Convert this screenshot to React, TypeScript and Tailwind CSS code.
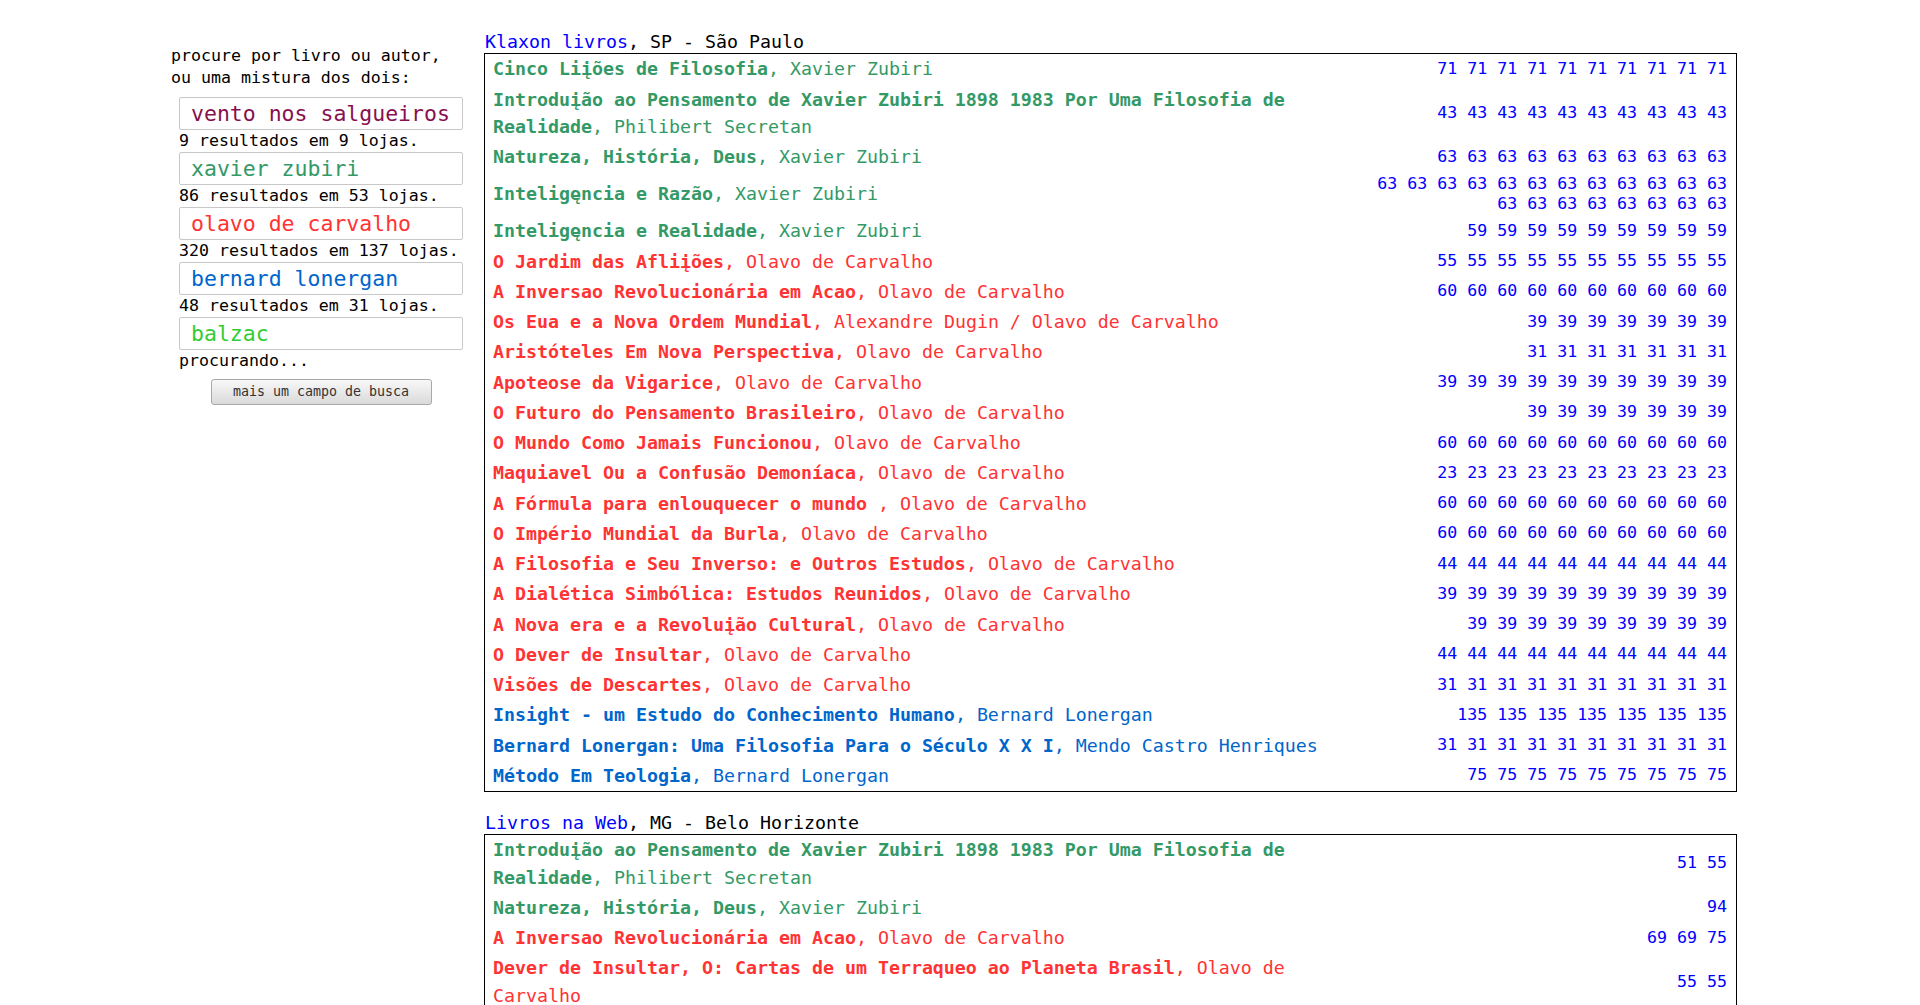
import React from "react";

type Book = {
  title: string;
  author: string;
  color: string;
  prices: string[];
};

const GREEN = "text-[#339966]";
const RED = "text-[#ff3333]";
const BLUE = "text-[#0066cc]";

const rep = (n: string, count: number) => Array.from({ length: count }, () => n);

const klaxon: Book[] = [
  { title: "Cinco Liįões de Filosofia", author: "Xavier Zubiri", color: GREEN, prices: rep("71", 10) },
  {
    title: "Introduįão ao Pensamento de Xavier Zubiri 1898 1983 Por Uma Filosofia de Realidade",
    author: "Philibert Secretan",
    color: GREEN,
    prices: rep("43", 10),
  },
  { title: "Natureza, História, Deus", author: "Xavier Zubiri", color: GREEN, prices: rep("63", 10) },
  { title: "Inteligęncia e Razão", author: "Xavier Zubiri", color: GREEN, prices: rep("63", 20) },
  { title: "Inteligęncia e Realidade", author: "Xavier Zubiri", color: GREEN, prices: rep("59", 9) },
  { title: "O Jardim das Afliįões", author: "Olavo de Carvalho", color: RED, prices: rep("55", 10) },
  { title: "A Inversao Revolucionária em Acao", author: "Olavo de Carvalho", color: RED, prices: rep("60", 10) },
  {
    title: "Os Eua e a Nova Ordem Mundial",
    author: "Alexandre Dugin / Olavo de Carvalho",
    color: RED,
    prices: rep("39", 7),
  },
  { title: "Aristóteles Em Nova Perspectiva", author: "Olavo de Carvalho", color: RED, prices: rep("31", 7) },
  { title: "Apoteose da Vigarice", author: "Olavo de Carvalho", color: RED, prices: rep("39", 10) },
  { title: "O Futuro do Pensamento Brasileiro", author: "Olavo de Carvalho", color: RED, prices: rep("39", 7) },
  { title: "O Mundo Como Jamais Funcionou", author: "Olavo de Carvalho", color: RED, prices: rep("60", 10) },
  { title: "Maquiavel Ou a Confusão Demoníaca", author: "Olavo de Carvalho", color: RED, prices: rep("23", 10) },
  { title: "A Fórmula para enlouquecer o mundo ", author: "Olavo de Carvalho", color: RED, prices: rep("60", 10) },
  { title: "O Império Mundial da Burla", author: "Olavo de Carvalho", color: RED, prices: rep("60", 10) },
  {
    title: "A Filosofia e Seu Inverso: e Outros Estudos",
    author: "Olavo de Carvalho",
    color: RED,
    prices: rep("44", 10),
  },
  { title: "A Dialética Simbólica: Estudos Reunidos", author: "Olavo de Carvalho", color: RED, prices: rep("39", 10) },
  { title: "A Nova era e a Revoluįão Cultural", author: "Olavo de Carvalho", color: RED, prices: rep("39", 9) },
  { title: "O Dever de Insultar", author: "Olavo de Carvalho", color: RED, prices: rep("44", 10) },
  { title: "Visões de Descartes", author: "Olavo de Carvalho", color: RED, prices: rep("31", 10) },
  {
    title: "Insight - um Estudo do Conhecimento Humano",
    author: "Bernard Lonergan",
    color: BLUE,
    prices: rep("135", 7),
  },
  {
    title: "Bernard Lonergan: Uma Filosofia Para o Século X X I",
    author: "Mendo Castro Henriques",
    color: BLUE,
    prices: rep("31", 10),
  },
  { title: "Método Em Teologia", author: "Bernard Lonergan", color: BLUE, prices: rep("75", 9) },
];

const livrosNaWeb: Book[] = [
  {
    title: "Introduįão ao Pensamento de Xavier Zubiri 1898 1983 Por Uma Filosofia de Realidade",
    author: "Philibert Secretan",
    color: GREEN,
    prices: ["51", "55"],
  },
  { title: "Natureza, História, Deus", author: "Xavier Zubiri", color: GREEN, prices: ["94"] },
  { title: "A Inversao Revolucionária em Acao", author: "Olavo de Carvalho", color: RED, prices: ["69", "69", "75"] },
  {
    title: "Dever de Insultar, O: Cartas de um Terraqueo ao Planeta Brasil",
    author: "Olavo de Carvalho",
    color: RED,
    prices: ["55", "55"],
  },
  { title: "Filosofia e Seu Inverso, A", author: "Olavo de Carvalho", color: RED, prices: ["52"] },
];

const searches = [
  { text: "vento nos salgueiros", color: "text-[#881050]", status: "9 resultados em 9 lojas." },
  { text: "xavier zubiri", color: "text-[#339966]", status: "86 resultados em 53 lojas." },
  { text: "olavo de carvalho", color: "text-[#ff3333]", status: "320 resultados em 137 lojas." },
  { text: "bernard lonergan", color: "text-[#0066cc]", status: "48 resultados em 31 lojas." },
  { text: "balzac", color: "text-[#33cc33]", status: "procurando..." },
];

const Store = ({ name, place, books }: { name: string; place: string; books: Book[] }) => (
  <div className="mb-[20px]">
    <div className="text-[18.27px] leading-[22px] pl-[1px] text-black">
      <a className="text-[#0000ff]">{name}</a>, {place}
    </div>
    <div className="border border-black px-[8px]">
      {books.map((b, i) => (
        <div key={i} className="flex items-center py-[1.375px]">
          <div className={`flex-1 text-[18.27px] leading-[27.5px] ${b.color}`}>
            <span className="font-bold">{b.title}</span>, {b.author}
          </div>
          <div className="w-[360px] text-right text-[16.6px] leading-[20.5px] text-[#0000ff] pr-[1px]">
            {b.prices.join(" ")}
          </div>
        </div>
      ))}
    </div>
  </div>
);

export default function App() {
  return (
    <div
      className="min-h-screen bg-white flex pl-[171px] pt-[31px]"
      style={{ fontFamily: '"DejaVu Sans Mono", "Liberation Mono", monospace' }}
    >
      {/* coluna de busca */}
      <div className="w-[313px] shrink-0 pt-[14px]">
        <p className="text-[16.6px] leading-[22px] text-black">
          procure por livro ou autor,
          <br />
          ou uma mistura dos dois:
        </p>
        <div className="ml-[8px] w-[284px] mt-[8px]">
          {searches.map((s) => (
            <div key={s.text}>
              <div
                className={`h-[33px] border border-[#c8c8c8] rounded-[2px] pl-[11px] text-[21.5px] leading-[31px] ${s.color}`}
              >
                {s.text}
              </div>
              <div className="text-[16.6px] leading-[22px] text-black">{s.status}</div>
            </div>
          ))}
          <div className="flex justify-center mt-[7px]">
            <button className="w-[221px] h-[26px] border border-[#a9a9a9] rounded-[3px] bg-gradient-to-b from-[#f8f8f8] to-[#dadada] text-[13.3px] text-[#333]">
              mais um campo de busca
            </button>
          </div>
        </div>
      </div>

      {/* resultados */}
      <div className="w-[1253px] shrink-0">
        <Store name="Klaxon livros" place="SP - São Paulo" books={klaxon} />
        <Store name="Livros na Web" place="MG - Belo Horizonte" books={livrosNaWeb} />
      </div>
    </div>
  );
}
